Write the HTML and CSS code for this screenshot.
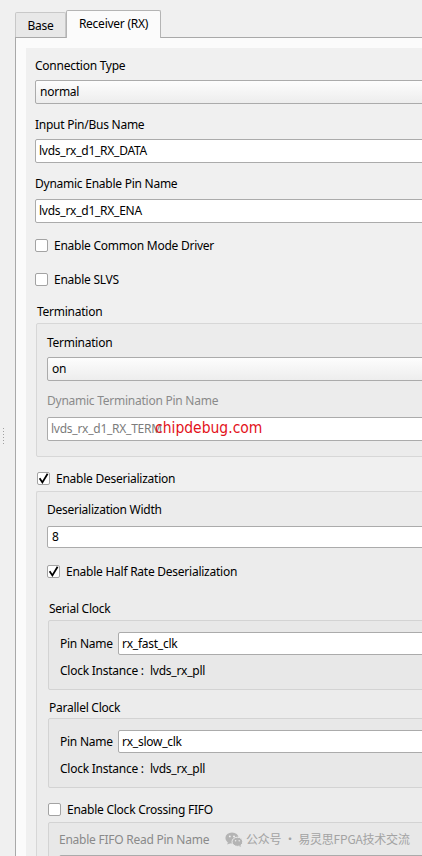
FILE: index.html
```html
<!DOCTYPE html>
<html>
<head>
<meta charset="utf-8">
<link rel="stylesheet" href="styles.css">
</head>
<body>
<div class="app">
  <div class="splitter"><div class="grip"></div></div>
  <div class="main">
    <div class="tabs">
      <div class="tab tab-base">Base</div>
      <div class="tab tab-active">Receiver (RX)</div>
    </div>
    <div class="pane">
      <div class="scroll">
        <div class="label first">Connection Type</div>
        <div class="combo gap6">normal</div>
        <div class="label gap12">Input Pin/Bus Name</div>
        <div class="field gap6">lvds_rx_d1_RX_DATA</div>
        <div class="label gap12">Dynamic Enable Pin Name</div>
        <div class="field gap7">lvds_rx_d1_RX_ENA</div>
        <div class="check-row gap14"><span class="box"></span><span>Enable Common Mode Driver</span></div>
        <div class="check-row gap17"><span class="box"></span><span>Enable SLVS</span></div>
        <div class="group-title gap15">Termination</div>
        <div class="group term-group">
          <div class="label">Termination</div>
          <div class="combo gap6">on</div>
          <div class="label disabled gap11">Dynamic Termination Pin Name</div>
          <div class="field disabled-field gap8">lvds_rx_d1_RX_TERM<span class="wm-chip">chipdebug.com</span></div>
        </div>
        <div class="check-row deser-check"><span class="box"><svg viewBox="0 0 13 13" width="13" height="13"><path d="M2.6 6.2 L5.4 10.4 L10.6 1.8" fill="none" stroke="#000" stroke-width="1.8" stroke-linejoin="miter"/></svg></span><span>Enable Deserialization</span></div>
        <div class="group deser-group">
          <div class="label">Deserialization Width</div>
          <div class="field short gap8">8</div>
          <div class="check-row gap15"><span class="box"><svg viewBox="0 0 13 13" width="13" height="13"><path d="M2.6 6.2 L5.4 10.4 L10.6 1.8" fill="none" stroke="#000" stroke-width="1.8"/></svg></span><span>Enable Half Rate Deserialization</span></div>
          <div class="group-title sub-title gap20">Serial Clock</div>
          <div class="subgroup clk-group">
            <div class="pin-row"><span class="pin-label">Pin Name</span><div class="field pin-field">rx_fast_clk</div></div>
            <div class="inst-row"><span class="inst-label">Clock Instance :</span><span>lvds_rx_pll</span></div>
          </div>
          <div class="group-title sub-title gap9">Parallel Clock</div>
          <div class="subgroup clk-group par">
            <div class="pin-row"><span class="pin-label">Pin Name</span><div class="field pin-field">rx_slow_clk</div></div>
            <div class="inst-row"><span class="inst-label">Clock Instance :</span><span>lvds_rx_pll</span></div>
          </div>
          <div class="check-row fifo-check"><span class="box"></span><span>Enable Clock Crossing FIFO</span></div>
          <div class="subgroup fifo-group">
            <div class="label disabled">Enable FIFO Read Pin Name</div>
            <div class="field gap7"></div>
          </div>
        </div>
      </div>
    </div>
  </div>
</div>
<div class="wm-wechat">
  <svg class="wechat" viewBox="0 0 18 15" width="18" height="15">
    <ellipse cx="7" cy="6" rx="6.6" ry="5.6" fill="#b4b4b4"/>
    <path d="M3 10 L2.2 12.6 L5.6 11.2 Z" fill="#b4b4b4"/>
    <circle cx="4.8" cy="4.4" r="0.95" fill="#f0f0f0"/>
    <circle cx="9" cy="4.4" r="0.95" fill="#f0f0f0"/>
    <ellipse cx="12.4" cy="9.8" rx="5.4" ry="4.6" fill="#b4b4b4" stroke="#ebebeb" stroke-width="1"/>
    <path d="M15.4 13 L16.2 14.8 L13.6 14 Z" fill="#b4b4b4"/>
    <circle cx="10.6" cy="8.8" r="0.75" fill="#ebebeb"/>
    <circle cx="14.2" cy="8.8" r="0.75" fill="#ebebeb"/>
  </svg>
  <span>公众号 · 易灵思FPGA技术交流</span>
</div>
</body>
</html>
```
FILE: styles.css
```css
* { box-sizing: border-box; }
html, body { margin: 0; padding: 0; }
body {
  width: 422px;
  height: 856px;
  overflow: hidden;
  position: relative;
  background: #f0f0f0;
  font-family: "Noto Sans", "Noto Sans CJK SC", sans-serif;
  font-size: 12px;
  line-height: 17px;
  letter-spacing: -0.25px;
  color: #000;
}
.app { display: flex; height: 856px; }
.splitter { width: 15px; flex: none; }
.grip {
  width: 1px;
  height: 17px;
  margin: 428px 0 0 3px;
  background: repeating-linear-gradient(to bottom, #a0a0a0 0 1px, transparent 1px 3px);
}
.main { width: 520px; flex: none; padding-top: 10px; display: flex; flex-direction: column; }
.tabs { display: flex; align-items: flex-end; height: 27px; position: relative; z-index: 1; }
.tab {
  text-align: center;
  border: 1px solid #c8c8c8;
  border-bottom: none;
  border-radius: 2px 2px 0 0;
  line-height: 23px;
  padding-top: 1px;
}
.tab-base { width: 51px; height: 25px; background: #e8e8e8; color: #000; }
.tab-active {
  width: 95px;
  height: 28px;
  margin-bottom: -1px;
  background: #fbfbfb;
  border-color: #b4b4b4;
}
.pane {
  flex: 1;
  border-top: 1px solid #a9a9a9;
  border-left: 1px solid #a9a9a9;
  background: #fbfbfb;
  padding: 10px 0 0 10px;
}
.scroll {
  height: 100%;
  background: #f0f0f0;
  padding: 9px 0 0 9px;
  display: flex;
  flex-direction: column;
}
.label { height: 17px; white-space: nowrap; }
.disabled { color: #8a8a8a; }
.combo {
  height: 24px;
  border: 1px solid #ababab;
  border-radius: 2px;
  background: linear-gradient(#fdfdfd, #ededed);
  padding-left: 4px;
  line-height: 22px;
}
.field {
  position: relative;
  height: 24px;
  border: 1px solid #ababab;
  border-radius: 2px;
  background: #fff;
  padding-left: 3px;
  line-height: 22px;
  white-space: nowrap;
}
.field.short { height: 22px; line-height: 20px; padding-left: 4px; }
.disabled-field { color: #7c7c7c; }
.wm-chip {
  position: absolute;
  left: 107px;
  top: 0;
  line-height: 21px;
  font-family: "DejaVu Sans Condensed", "DejaVu Sans", sans-serif;
  font-stretch: condensed;
  font-size: 15.5px;
  letter-spacing: 0;
  color: #e3121b;
}
.check-row { display: flex; align-items: center; gap: 6px; height: 17px; white-space: nowrap; }
.box {
  width: 13px;
  height: 13px;
  flex: none;
  border: 1px solid #a3a3a3;
  border-radius: 2px;
  background: #fff;
  position: relative;
}
.box svg { position: absolute; left: -1px; top: -1px; }
.group-title { height: 17px; margin-left: 2px; }
.group {
  margin-left: 1px;
  border: 1px solid #d7d7d7;
  border-radius: 2px;
  background: #ececec;
  display: flex;
  flex-direction: column;
}
.term-group { margin-top: 3px; padding: 10px 0 15px 10px; }
.deser-check { margin-top: 13px; margin-left: 2px; }
.deser-group { margin-top: 4px; padding: 9px 0 0 10px; flex: 1; border-right: none; border-bottom: none; }
.subgroup {
  margin-left: 1px;
  border: 1px solid #d3d3d3;
  border-radius: 2px;
  background: #e8e8e8;
  display: flex;
  flex-direction: column;
}
.sub-title { margin-left: 2px; }
.clk-group { margin-top: 3px; padding: 11px 0 10px 11px; }
.clk-group.par { margin-top: 2px; }
.pin-row { display: flex; align-items: center; height: 23px; }
.pin-label { width: 58px; flex: none; }
.pin-field { flex: 1; height: 23px; line-height: 21px; }
.inst-row { display: flex; height: 17px; margin-top: 7px; white-space: nowrap; }
.inst-label { width: 90px; flex: none; }
.fifo-check { margin-top: 13px; margin-left: 1px; }
.fifo-group { margin-top: 4px; padding: 8px 0 0 10px; flex: 1; }
.first { margin-top: 0; }
.gap6 { margin-top: 6px; }
.gap7 { margin-top: 7px; }
.gap8 { margin-top: 8px; }
.gap9 { margin-top: 9px; }
.gap11 { margin-top: 11px; }
.gap12 { margin-top: 12px; }
.gap14 { margin-top: 14px; }
.gap15 { margin-top: 15px; }
.gap17 { margin-top: 17px; }
.gap20 { margin-top: 20px; }
.wm-wechat {
  position: absolute;
  left: 225px;
  top: 830px;
  display: flex;
  align-items: center;
  gap: 3px;
  font-family: "Noto Sans CJK SC", sans-serif;
  font-size: 12px;
  line-height: 18px;
  letter-spacing: -0.2px;
  color: #a3a3a3;
  white-space: nowrap;
}
.wechat { flex: none; }
```
